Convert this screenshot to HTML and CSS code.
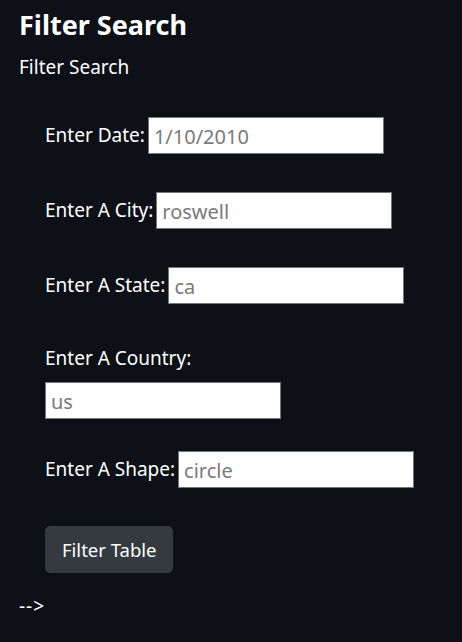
FILE: index.html
```html
<!DOCTYPE html>
<html lang="en">
<head>
<meta charset="utf-8">
<title>Filter Search</title>
<link rel="stylesheet" href="styles.css">
</head>
<body>
<h1 class="title">Filter Search</h1>
<p class="subtitle">Filter Search</p>
<form class="filters">
  <div class="field">
    <label class="field-label" for="date">Enter Date:</label>
    <input class="field-input" id="date" type="text" placeholder="1/10/2010">
  </div>
  <div class="field">
    <label class="field-label" for="city">Enter A City:</label>
    <input class="field-input" id="city" type="text" placeholder="roswell">
  </div>
  <div class="field">
    <label class="field-label" for="state">Enter A State:</label>
    <input class="field-input" id="state" type="text" placeholder="ca">
  </div>
  <div class="field field-stacked">
    <label class="field-label" for="country">Enter A Country:</label>
    <input class="field-input" id="country" type="text" placeholder="us">
  </div>
  <div class="field field-shape">
    <label class="field-label" for="shape">Enter A Shape:</label>
    <input class="field-input" id="shape" type="text" placeholder="circle">
  </div>
  <button class="btn-filter" type="button">Filter Table</button>
</form>
<p class="trailer">--&gt;</p>
</body>
</html>
```
FILE: styles.css
```css
html, body {
  margin: 0;
  padding: 0;
  background: #0d1017;
}
body {
  padding: 8px 19px;
  color: #ffffff;
  font-family: "Noto Sans", "Open Sans", sans-serif;
  font-size: 19px;
}
.title {
  margin: 0;
  font-size: 27px;
  font-weight: 700;
  line-height: 34px;
}
.subtitle {
  margin: 13px 0 0;
  font-size: 19px;
  line-height: 25px;
}
.filters {
  display: flex;
  flex-direction: column;
  align-items: flex-start;
  padding-left: 26px;
  margin-top: 37px;
}
.field {
  display: flex;
  align-items: center;
  gap: 3px;
  margin-bottom: 38px;
}
.field-stacked {
  flex-direction: column;
  align-items: flex-start;
  gap: 10px;
  margin-top: 3px;
  margin-bottom: 32px;
}
.field-shape {
  margin-bottom: 38px;
}
.field-label {
  font-size: 19px;
  line-height: 27px;
  white-space: nowrap;
}
.field-input {
  box-sizing: border-box;
  width: 236px;
  height: 37px;
  margin: 0;
  padding: 1px 5px 0;
  border: 1px solid #767676;
  border-radius: 0;
  background: #ffffff;
  font-family: "Noto Sans", "Open Sans", sans-serif;
  font-size: 20px;
  color: #212529;
}
.field-input::placeholder {
  color: #7a7a7a;
}
.btn-filter {
  box-sizing: border-box;
  height: 47px;
  padding: 0 16px;
  border: 1px solid #343a40;
  border-radius: 5px;
  background: #343a40;
  color: #ffffff;
  font-family: "Noto Sans", "Open Sans", sans-serif;
  font-size: 18.5px;
  cursor: pointer;
}
.trailer {
  margin: 21px 0 0;
  font-size: 19px;
  line-height: 25px;
  letter-spacing: 1px;
}
```
